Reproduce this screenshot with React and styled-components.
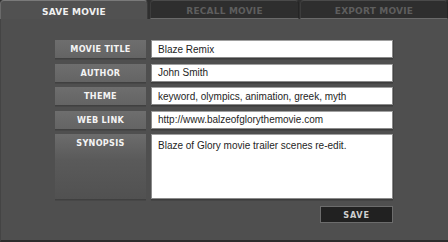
import React from "react";
import styled, { createGlobalStyle } from "styled-components";

const Global = createGlobalStyle`
  html, body { margin: 0; padding: 0; background: #4f4f4f; }
  * { box-sizing: border-box; }
`;

const Frame = styled.div`
  width: 448px;
  height: 242px;
  background: #2f2f2f;
  display: flex;
  flex-direction: column;
  overflow: hidden;
`;

const TabBar = styled.div`
  display: flex;
  height: 19px;
  flex: none;
`;

const Tab = styled.div`
  width: ${(p) => p.$w}px;
  flex: none;
  display: flex;
  align-items: center;
  justify-content: center;
  padding-top: ${(p) => (p.$active ? 4 : 2)}px;
  font-family: "DejaVu Sans", Verdana, sans-serif;
  font-weight: bold;
  font-size: 9px;
  letter-spacing: 0.2px;
  border-radius: 4px 4px 0 0;
  color: ${(p) => (p.$active ? "#f0f0f0" : "#5e5e5e")};
  background: ${(p) => (p.$active ? "#515151" : "#2e2e2e")};
  border-top: 1px solid ${(p) => (p.$active ? "#7a7a7a" : "#4a4a4a")};
  border-left: 1px solid ${(p) => (p.$active ? "#6a6a6a" : "#3c3c3c")};
  border-right: 1px solid ${(p) => (p.$active ? "#3a3a3a" : "#252525")};
  border-bottom: ${(p) => (p.$active ? "none" : "1px solid #6a6a6a")};
  margin-right: ${(p) => p.$mr || 0}px;
`;

const Panel = styled.div`
  flex: 1;
  background: #4f4f4f;
  border-left: 1px solid #444;
  border-bottom: 2px solid #2c2c2c;
  padding: 21px 0 0 54px;
  display: flex;
  flex-direction: column;
`;

const Form = styled.div`
  display: grid;
  grid-template-columns: 91px 242px;
  column-gap: 5px;
  row-gap: 5.5px;
  grid-auto-rows: 18px;
`;

const Label = styled.div`
  grid-row: span ${(p) => p.$span || 1};
  display: flex;
  justify-content: center;
  align-items: flex-start;
  padding-top: 4px;
  background: ${(p) =>
    p.$tall
      ? "linear-gradient(#6c6c6c, #5a5a5a 40%, #515151)"
      : "linear-gradient(#6e6e6e, #646464)"};
  box-shadow: 0 1.5px 0 #404040;
  color: #f4f4f4;
  font-family: "DejaVu Sans Condensed", "DejaVu Sans", sans-serif;
  font-weight: bold;
  font-size: 9px;
  letter-spacing: 0.3px;
  line-height: 10px;
`;

const Field = styled.div`
  grid-row: span ${(p) => p.$span || 1};
  background: #fff;
  border: 1px solid #8a8a8a;
  border-top-color: #a0a0a0;
  box-shadow: 0 1.5px 0 #3c3c3c, 1px 0 0 #444;
  padding: ${(p) => (p.$tall ? "5px 6px" : "0 6px")};
  display: flex;
  align-items: ${(p) => (p.$tall ? "flex-start" : "center")};
  font-family: "Liberation Sans", Arial, sans-serif;
  font-size: 10px;
  color: #1e1e1e;
  white-space: nowrap;
  overflow: hidden;
`;

const Actions = styled.div`
  display: flex;
  justify-content: flex-end;
  width: 338px;
  margin-top: 7px;
`;

const SaveButton = styled.button`
  width: 73px;
  height: 17px;
  padding: 0;
  background: #212121;
  border: 1px solid #6c6c6c;
  color: #cfcfcf;
  font-family: "DejaVu Sans Condensed", "DejaVu Sans", sans-serif;
  font-weight: bold;
  font-size: 9px;
  letter-spacing: 0.8px;
  cursor: pointer;
`;

const rows = [
  ["MOVIE TITLE", "Blaze Remix"],
  ["AUTHOR", "John Smith"],
  ["THEME", "keyword, olympics, animation, greek, myth"],
  ["WEB LINK", "http://www.balzeofglorythemovie.com"],
];

export default function App() {
  return (
    <>
      <Global />
      <Frame>
        <TabBar>
          <Tab $w={148} $mr={2} $active>SAVE MOVIE</Tab>
          <Tab $w={149} $mr={1}>RECALL MOVIE</Tab>
          <Tab $w={148}>EXPORT MOVIE</Tab>
        </TabBar>
        <Panel>
          <Form>
            {rows.map(([l, v]) => (
              <React.Fragment key={l}>
                <Label>{l}</Label>
                <Field>{v}</Field>
              </React.Fragment>
            ))}
            <Label $tall $span={3}>SYNOPSIS</Label>
            <Field $tall $span={3}>Blaze of Glory movie trailer scenes re-edit.</Field>
          </Form>
          <Actions>
            <SaveButton>SAVE</SaveButton>
          </Actions>
        </Panel>
      </Frame>
    </>
  );
}
